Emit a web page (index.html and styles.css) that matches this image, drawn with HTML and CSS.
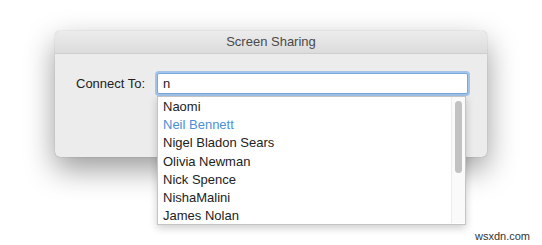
FILE: index.html
```html
<!DOCTYPE html>
<html lang="en">

<head>
    <meta charset="UTF-8">
    <title>Screen Sharing</title>
    <link rel="stylesheet" href="styles.css">
</head>

<body>
    <div class="window">
        <div class="titlebar">Screen Sharing</div>
        <div class="content">
            <label class="label" for="host">Connect To:</label>
            <div class="field">
                <div class="input" id="host">n</div>
                <ul class="suggest">
                    <li>Naomi</li>
                    <li class="hl">Neil Bennett</li>
                    <li>Nigel Bladon Sears</li>
                    <li>Olivia Newman</li>
                    <li>Nick Spence</li>
                    <li>NishaMalini</li>
                    <li>James Nolan</li>
                </ul>
                <div class="scroll"><div class="thumb"></div></div>
            </div>
        </div>
    </div>
    <div class="mark">wsxdn.com</div>
</body>

</html>
```

FILE: styles.css
```css
/* macOS style dialog */
body {
    margin: 0;
    padding: 31px 0 0 55px;
    background: #fff;
    font-family: "Liberation Sans", Arial, sans-serif;
    font-size: 13px;
    color: #222;
    height: 245px;
    box-sizing: border-box;
    overflow: hidden;
    position: relative;
}

.window {
    width: 432px;
    height: 126px;
    background: #ececec;
    border-radius: 5px;
    box-shadow: 0 12px 30px rgba(0, 0, 0, 0.4), 0 0 1px rgba(0, 0, 0, 0.4);
}

.titlebar {
    height: 22px;
    line-height: 22px;
    text-align: center;
    color: #4a4a4a;
    background: linear-gradient(#ececec, #dcdcdc);
    border-bottom: 1px solid #cdcdcd;
    border-radius: 5px 5px 0 0;
}

.content {
    display: flex;
    align-items: center;
    padding: 19px 0 0 21px;
}

.label {
    width: 81px;
}

.field {
    position: relative;
}

.input {
    width: 301px;
    height: 19px;
    line-height: 19px;
    padding: 0 3px 0 5px;
    background: #fff;
    border: 1px solid #7aa7dc;
    box-shadow: 0 0 0 2px #a3c3ea;
    border-radius: 2px;
}

.suggest {
    position: absolute;
    top: 23px;
    left: 0;
    width: 307px;
    height: 126px;
    margin: 0;
    padding: 1px 0 0 0;
    list-style: none;
    background: #fff;
    border: 1px solid #c4c4c4;
    box-shadow: 0 3px 8px rgba(0, 0, 0, 0.2);
    box-sizing: content-box;
}

.suggest li {
    height: 18.2px;
    line-height: 18px;
    padding-left: 5px;
}

.suggest .hl {
    color: #4a90d9;
}

.scroll {
    position: absolute;
    top: 24px;
    right: 3px;
    width: 13px;
    height: 126px;
    border-left: 1px solid #ececec;
    background: #fafafa;
}

.thumb {
    margin: 4px 0 0 3px;
    width: 7px;
    height: 72px;
    border-radius: 4px;
    background: #c2c2c2;
}

.mark {
    position: absolute;
    right: 12px;
    bottom: 3px;
    font-size: 11px;
    color: #333;
}
```
